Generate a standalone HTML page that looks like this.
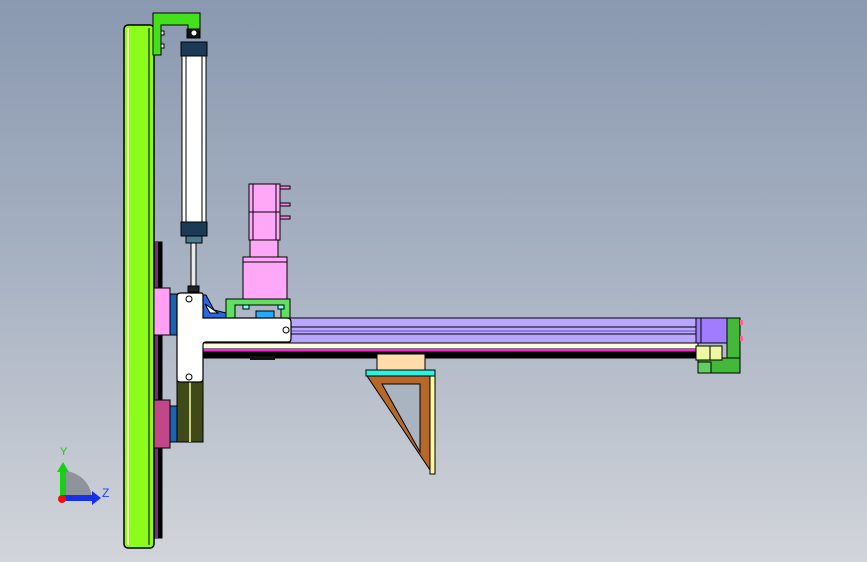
<!DOCTYPE html><html><head><style>html,body{margin:0;padding:0}body{width:867px;height:562px;overflow:hidden;background:linear-gradient(#8a99b0,#a9b3c3 50%,#d2d5da)}</style></head><body>
<svg width="867" height="562" xmlns="http://www.w3.org/2000/svg" style="position:absolute;left:0;top:0" stroke="#000" stroke-width="1">
<rect x="153" y="242" width="9" height="296" fill="#000"/>
<rect x="153" y="242" width="5" height="296" fill="#7a2a80" stroke="none"/>
<rect x="124" y="25" width="30" height="523" rx="4" fill="#8cfc1c" stroke-width="1.5"/>
<line x1="128" y1="28" x2="128" y2="545" stroke="#f4ffb0" stroke-width="2"/>
<line x1="149" y1="28" x2="149" y2="545"/>
<path d="M153 13H200V36H188V25H161V55H153Z" fill="#44e01c"/>
<rect x="161" y="31" width="3" height="4" fill="#fff"/><rect x="161" y="44" width="3" height="4" fill="#fff"/>
<rect x="187" y="29" width="13" height="9" fill="#111"/><circle cx="194" cy="33" r="2.5" fill="#fff" stroke="none"/>
<rect x="181" y="42" width="26" height="14" fill="#1b3a55"/>
<rect x="182" y="56" width="24" height="166" fill="#fff"/>
<line x1="186" y1="56" x2="186" y2="222"/><line x1="202" y1="56" x2="202" y2="222"/>
<rect x="181" y="222" width="26" height="14" fill="#1b3a55"/>
<rect x="186" y="236" width="16" height="7" fill="#4c7a8e"/>
<rect x="191" y="243" width="5" height="45" fill="#e8ece8"/>
<rect x="188" y="286" width="11" height="6" fill="#222"/>
<rect x="249" y="184" width="31" height="56" fill="#ffa8f8"/>
<line x1="253" y1="184" x2="253" y2="240"/><line x1="276" y1="184" x2="276" y2="240"/><line x1="249" y1="212" x2="280" y2="212"/>
<rect x="280" y="186" width="10" height="3" fill="#ff80f0"/><rect x="280" y="203" width="10" height="3" fill="#ff80f0"/><rect x="280" y="216" width="10" height="3" fill="#ff80f0"/>
<rect x="250" y="240" width="28" height="17" fill="#ffa8f8"/>
<rect x="243" y="257" width="44" height="47" fill="#ffa8f8"/>
<line x1="243" y1="262" x2="287" y2="262"/>
<path d="M226 299H290V318H281V305H235V318H226Z" fill="#60e060"/>
<rect x="243" y="305" width="6" height="4" fill="#80ffff"/><rect x="278" y="305" width="6" height="4" fill="#80ffff"/>
<rect x="256" y="311" width="18" height="7" fill="#22aaff"/>
<rect x="290" y="318" width="408" height="25" fill="#b9a6ff"/>
<line x1="290" y1="327" x2="698" y2="327"/><line x1="290" y1="331" x2="698" y2="331" stroke="#6a50c0"/><line x1="290" y1="334" x2="698" y2="334"/>
<rect x="203" y="343" width="495" height="6" fill="#fffde0"/>
<rect x="203" y="349" width="495" height="3" fill="#ff20e8" stroke="none"/>
<rect x="203" y="352" width="495" height="6" fill="#000"/>
<rect x="250" y="356" width="25" height="4" fill="#111" stroke="none"/>
<rect x="154" y="288" width="16" height="47" fill="#ffa0f4"/>
<rect x="170" y="294" width="7" height="41" fill="#1a64b0"/>
<rect x="154" y="400" width="16" height="48" fill="#c04888"/>
<rect x="170" y="406" width="7" height="36" fill="#1a64b0"/>
<rect x="177" y="380" width="26" height="62" fill="#404a18"/>
<line x1="190" y1="380" x2="190" y2="442" stroke="#c8d080" stroke-width="2"/>
<path d="M203 295L206 295L214 310L226 313L226 318L203 318Z" fill="#2a66e0"/>
<path d="M205 304L210 313L218 313Z" fill="#fff"/>
<path d="M181 293H201Q203 293 203 295V318H287Q291 318 291 322V339Q291 342 288 342H206Q203 342 203 345V379Q203 382 200 382H180Q177 382 177 379V296Q177 293 181 293Z" fill="#fff" stroke-width="1.2"/>
<circle cx="189" cy="299" r="3" fill="none"/><circle cx="286" cy="330" r="3" fill="none"/><circle cx="189" cy="377" r="3" fill="none"/>
<rect x="377" y="354" width="48" height="16" fill="#ffdcaa"/>
<rect x="366" y="370" width="69" height="6" fill="#30f0e0"/>
<path d="M367 376H430V470Z" fill="#b5682a"/>
<path d="M382 384H420V452Z" fill="#aab3c0"/>
<rect x="430" y="376" width="5" height="98" fill="#fffaa0"/>
<rect x="727" y="318" width="13" height="55" fill="#44b838"/>
<rect x="698" y="358" width="42" height="15" fill="#44b838"/>
<rect x="698" y="362" width="13" height="11" fill="#60d060"/>
<rect x="696" y="318" width="31" height="25" fill="#a27cff"/>
<line x1="701" y1="318" x2="701" y2="343"/>
<rect x="696" y="346" width="26" height="14" fill="#eef8a0"/>
<line x1="710" y1="346" x2="710" y2="360"/>
<rect x="740" y="320" width="3" height="5" fill="#ff60a0" stroke="none"/><rect x="740" y="336" width="3" height="5" fill="#ff60a0" stroke="none"/>
<g stroke="none">
<path d="M63 498V471A29 29 0 0 1 92 498Z" fill="#8f939c"/>
<rect x="60" y="470" width="6" height="28" fill="#18d018"/><path d="M57 472L63 462L69 472Z" fill="#18d018"/>
<rect x="63" y="495" width="30" height="6" fill="#1830e8"/><path d="M92 491L101 498L92 505Z" fill="#1830e8"/>
<circle cx="62" cy="499" r="4" fill="#ee1010"/>
</g>
<text x="60" y="455" font-family="Liberation Sans,sans-serif" font-size="11" fill="#20c020" stroke="none">Y</text>
<text x="102" y="497" font-family="Liberation Sans,sans-serif" font-size="12" fill="#2040ff" stroke="none">Z</text>
</svg>
</body></html>
